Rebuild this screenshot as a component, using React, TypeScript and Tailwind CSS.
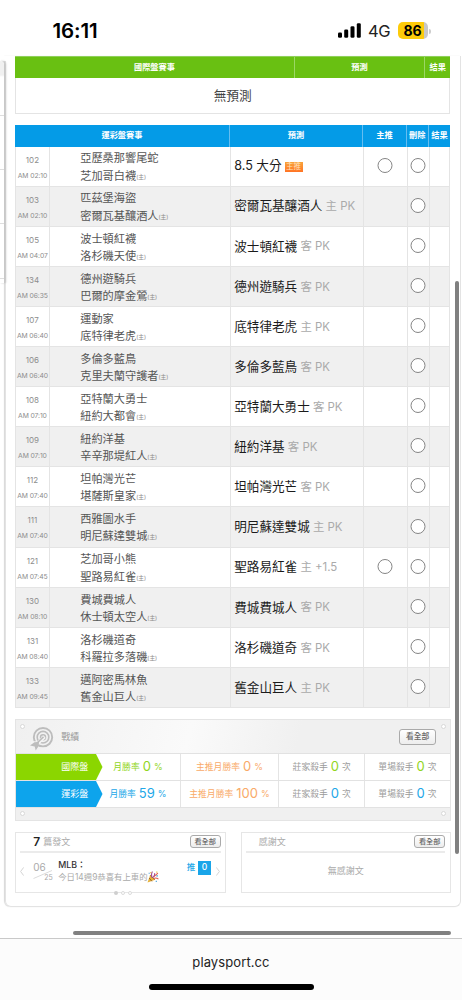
import React from 'react';

type Game = {
  no: string;
  time: string;
  away: string;
  home: string;
  pick: string;
  note?: string;
  main?: boolean;
  tag?: boolean;
};

const games: Game[] = [
  { no: '102', time: '02:10', away: '亞歷桑那響尾蛇', home: '芝加哥白襪', pick: '8.5 大分', main: true, tag: true },
  { no: '103', time: '02:10', away: '匹茲堡海盜', home: '密爾瓦基釀酒人', pick: '密爾瓦基釀酒人', note: '主 PK' },
  { no: '105', time: '04:07', away: '波士頓紅襪', home: '洛杉磯天使', pick: '波士頓紅襪', note: '客 PK' },
  { no: '134', time: '06:35', away: '德州遊騎兵', home: '巴爾的摩金鶯', pick: '德州遊騎兵', note: '客 PK' },
  { no: '107', time: '06:40', away: '運動家', home: '底特律老虎', pick: '底特律老虎', note: '主 PK' },
  { no: '106', time: '06:40', away: '多倫多藍鳥', home: '克里夫蘭守護者', pick: '多倫多藍鳥', note: '客 PK' },
  { no: '108', time: '07:10', away: '亞特蘭大勇士', home: '紐約大都會', pick: '亞特蘭大勇士', note: '客 PK' },
  { no: '109', time: '07:10', away: '紐約洋基', home: '辛辛那堤紅人', pick: '紐約洋基', note: '客 PK' },
  { no: '112', time: '07:40', away: '坦帕灣光芒', home: '堪薩斯皇家', pick: '坦帕灣光芒', note: '客 PK' },
  { no: '111', time: '07:40', away: '西雅圖水手', home: '明尼蘇達雙城', pick: '明尼蘇達雙城', note: '主 PK' },
  { no: '121', time: '07:45', away: '芝加哥小熊', home: '聖路易紅雀', pick: '聖路易紅雀', note: '主 +1.5', main: true },
  { no: '130', time: '08:10', away: '費城費城人', home: '休士頓太空人', pick: '費城費城人', note: '客 PK' },
  { no: '131', time: '08:40', away: '洛杉磯道奇', home: '科羅拉多落磯', pick: '洛杉磯道奇', note: '客 PK' },
  { no: '133', time: '09:45', away: '邁阿密馬林魚', home: '舊金山巨人', pick: '舊金山巨人', note: '主 PK' },
];

const Radio: React.FC = () => <span className="block size-[15px] -translate-x-[0.5px] -translate-y-px rounded-full border border-[#858585] bg-white" />;

const StatusBar: React.FC = () => (
  <header className="flex h-14 shrink-0 items-start pt-[19px] pl-[52.5px]">
    <span className="w-[284.5px] text-[20.5px] leading-6 font-semibold tracking-[-0.1px] text-black">16:11</span>
    <svg className="mt-[4px] h-4 w-6" viewBox="0 0 24 16">
      <rect x="1" y="9.5" width="4" height="5.3" rx="1.3" />
      <rect x="7.2" y="6.4" width="4" height="8.4" rx="1.3" />
      <rect x="13.5" y="3.3" width="4" height="11.5" rx="1.3" />
      <rect x="19.8" y="0.2" width="4" height="14.6" rx="1.3" />
    </svg>
    <span className="ml-[7px] w-[30px] text-[16.5px] leading-6 tracking-[-0.3px] text-[#222]">4G</span>
    <span className="mt-[3px] flex h-[17px] w-[30px] items-center justify-center rounded-[5px] bg-[linear-gradient(90deg,#fdcb0a_86%,#c8c8c8_86%)] pr-px text-[14px] leading-none font-bold text-black">86</span>
    <span className="mt-[10px] ml-px h-[5px] w-[1.5px] rounded-r bg-[#ccc]" />
  </header>
);

const GameRow: React.FC<{ game: Game; shaded: boolean }> = ({ game, shaded }) => (
  <div
    className={`grid h-[40.12px] grid-cols-[33.5px_181px_133.5px_43.5px_22px_19.5px] divide-x divide-[#e4e4e4] border-x border-b border-[#e4e4e4] ${shaded ? 'bg-[#f0f0f0]' : 'bg-white'}`}
  >
    <div className="flex flex-col items-center pt-[5px] text-[#8d8d8d]">
      <span className="text-[8px] leading-4">{game.no}</span>
      <span className="text-[6.8px] leading-4 tracking-[-0.1px] whitespace-nowrap">AM {game.time}</span>
    </div>
    <div className="pt-[3.8px] pl-[30.5px] text-[11.2px] leading-[16.2px] text-[#555]">
      <div>{game.away}</div>
      <div className="flex items-center">
        {game.home}
        <span className="pt-[2px] text-[5.7px] text-[#888]">(主)</span>
      </div>
    </div>
    <div className="flex items-center pt-[1.5px] pl-[3.5px] text-[12.6px] whitespace-pre text-[#1b1b1b]">
      <span>{game.pick}</span>
      {game.note && <span className="text-[11.4px] text-[#aaa]"> {game.note}</span>}
      {game.tag && (
        <span className="ml-[3px] flex h-[10px] w-[18px] items-center justify-center bg-linear-to-b from-[#f8a43c] to-[#ff7325] text-[7.5px] leading-none text-[#ffe3bd]">主推</span>
      )}
    </div>
    <div className="flex items-center justify-center">{game.main && <Radio />}</div>
    <div className="flex items-center justify-center">
      <Radio />
    </div>
    <div />
  </div>
);

const MoreButton: React.FC<{ large?: boolean }> = ({ large }) => (
  <span
    className={`flex items-center justify-center rounded-[3px] border border-[#aaa] bg-linear-to-b from-white to-[#ededed] leading-none font-medium text-[#666] ${large ? 'h-[15.5px] w-[37px] text-[7.8px]' : 'h-[13px] w-[31px] text-[7.2px]'}`}
  >
    看全部
  </span>
);

const Stat: React.FC<{ label: string; value: string; unit: string; tone: string; valueTone?: string }> = ({ label, value, unit, tone, valueTone }) => (
  <div className={`flex items-center justify-center text-[8.8px] ${tone}`}>
    {label}
    <span className={`mx-[3px] text-[13px] leading-none ${valueTone ?? ''}`}>{value}</span>
    {unit}
  </div>
);

const StatRow: React.FC<{ label: string; rate: string; mainRate: string; blue?: boolean }> = ({ label, rate, mainRate, blue }) => {
  const tone = blue ? 'text-[#22a7e8]' : 'text-[#91d51c]';
  return (
    <div className="flex h-[27px] border-b border-[#e2e2e2] bg-white">
      <div className={`flex w-[80px] items-center justify-end pr-[8px] text-[9px] text-white ${blue ? 'bg-[#0da4ec]' : 'bg-[#8bd600]'}`}>{label}</div>
      <svg className={`-mr-[7px] h-[26px] w-[7px] ${blue ? 'fill-[#0da4ec]' : 'fill-[#8bd600]'}`} viewBox="0 0 7 26">
        <path d="M0 0L6.5 13L0 26Z" />
      </svg>
      <div className="grid flex-1 grid-cols-[84.5px_98.5px_86px_1fr] divide-x divide-[#e4e4e4]">
        <Stat label="月勝率" value={rate} unit="%" tone={tone} />
        <Stat label="主推月勝率" value={mainRate} unit="%" tone="text-[#f9aa68]" />
        <Stat label="莊家殺手" value="0" unit="次" tone="text-[#9b9b9b]" valueTone={tone} />
        <Stat label="單場殺手" value="0" unit="次" tone="text-[#9b9b9b]" valueTone={tone} />
      </div>
    </div>
  );
};

const Rivet: React.FC = () => <span className="size-[5px] rounded-full border border-[#d8d8d8] bg-white" />;

const TargetIcon: React.FC = () => (
  <svg className="h-[24px] w-[24px]" viewBox="0 0 24 24" fill="none" stroke="#bdbdbd">
    <circle cx="13" cy="10.2" r="9.2" strokeWidth="1.9" />
    <circle cx="13" cy="10.2" r="5.8" strokeWidth="1.6" />
    <circle cx="13" cy="10.2" r="2.5" strokeWidth="1.5" />
    <path d="M1 16H8L14.5 9.8" stroke="#f4f4f4" strokeWidth="3.5" />
    <path d="M5 18L13.5 9.8" strokeWidth="1.6" />
    <path d="M0 18.6L4.4 15.3L9 15.1L8.7 19L5.7 23.6L4.7 19.5Z" fill="#bdbdbd" stroke="none" />
  </svg>
);

const StatsPanel: React.FC = () => (
  <section className="mt-[11px] w-[435.5px] border border-[#e4e4e4] bg-[#f0f0f0]">
    <div className="flex h-[33.5px] items-start justify-between border-b border-[#e2e2e2] bg-[linear-gradient(105deg,#f0f0f0,#fafafa_40%,#f0f0f0_65%)] px-[3.5px] pt-[4px]">
      <Rivet />
      <div className="mt-[3px] ml-[5px] flex flex-1 items-start">
        <TargetIcon />
        <span className="ml-[7.5px] pt-[2px] text-[9px] leading-4 text-[#999]">戰績</span>
      </div>
      <div className="mt-[5px] mr-[5px]">
        <MoreButton large />
      </div>
      <Rivet />
    </div>
    <StatRow label="國際盤" rate="0" mainRate="0" />
    <StatRow label="運彩盤" rate="59" mainRate="100" blue />
    <div className="flex h-[12px] items-center justify-between px-[3.5px]">
      <Rivet />
      <Rivet />
    </div>
  </section>
);

const PartyPopper: React.FC = () => (
  <svg className="-ml-px h-[12px] w-[12px]" viewBox="0 0 22 22">
    <path d="M1 21L6 7L15 16Z" fill="#e8b23a" />
    <path d="M4 13L9 19M6 8L14 16" stroke="#8d5620" strokeWidth="1.6" />
    <path d="M9 12Q7 5 10 1M11 12Q15 9 14 4" fill="none" stroke="#a5509f" strokeWidth="2" />
    <path d="M12 14Q16 11 21 15M13 10L20 4" fill="none" stroke="#e0574c" strokeWidth="2" />
    <path d="M3 3h2v2H3zM17 8h3v2h-3zM16 18h2v2h-2z" fill="#4b9fd7" />
    <path d="M17 1h2v2h-2zM6 2h2v2H6z" fill="#e9bd3e" />
  </svg>
);

const Chevron: React.FC<{ right?: boolean }> = ({ right }) => (
  <svg className={`h-[9px] w-[4px] ${right ? 'rotate-180' : ''}`} viewBox="0 0 4 9" fill="none" stroke="#d4d4d4">
    <path d="M3.7 0.4L0.6 4.5L3.7 8.6" />
  </svg>
);

const Posts: React.FC = () => (
  <section className="relative h-[61.5px] w-[210.5px] border border-[#e6e6e6] px-[4px]">
    <div className="flex h-[20.5px] items-center border-b-2 border-[#ebebeb] pl-[13px]">
      <span className="w-[10px] text-[12px] leading-none font-semibold text-[#222]">7</span>
      <span className="flex-1 text-[9px] text-[#aaa]">篇發文</span>
      <MoreButton />
    </div>
    <div className="flex items-start pt-[7.5px]">
      <div className="mt-[6px] w-[13px]">
        <Chevron />
      </div>
      <div className="relative h-[22px] w-[25px] text-[#aaa]">
        <span className="block text-[10px] leading-[12px]">06</span>
        <svg className="absolute top-[9px] left-0 h-[9px] w-[20px]" viewBox="0 0 20 9">
          <path d="M0.5 8.5L19 0.5" stroke="#dcdcdc" />
        </svg>
        <span className="absolute top-[13px] left-[11px] text-[7px] leading-[8px]">25</span>
      </div>
      <div className="w-[128.5px] whitespace-nowrap">
        <div className="h-[10px] text-[8.8px] leading-[7px] font-medium text-[#333]">MLB：</div>
        <div className="flex items-center text-[8.4px] leading-[10px] text-[#aaa]">
          今日14週9恭喜有上車的
          <PartyPopper />
        </div>
      </div>
      <span className="w-[11.5px] text-[8.5px] leading-[12px] font-medium text-[#22a7e8]">推</span>
      <span className="flex h-[14px] w-[12.5px] items-center justify-center bg-[#19a5e9] text-[8.5px] leading-none font-medium text-white">0</span>
      <div className="mt-[6px] ml-[5px]">
        <Chevron right />
      </div>
    </div>
    <div className="absolute -bottom-[2.5px] left-[98px] flex gap-[3px]">
      <span className="size-[4px] rounded-full bg-[#cfcfcf]" />
      <span className="size-[4px] rounded-full border border-[#dcdcdc] bg-white" />
      <span className="size-[4px] rounded-full border border-[#dcdcdc] bg-white" />
    </div>
  </section>
);

const Thanks: React.FC = () => (
  <section className="h-[61.5px] w-[210px] border border-[#e6e6e6] px-[4.5px]">
    <div className="flex h-[20.5px] items-center justify-between border-b-2 border-[#ebebeb] pl-[12.5px]">
      <span className="text-[9px] text-[#aaa]">感謝文</span>
      <MoreButton />
    </div>
    <div className="flex h-[36px] items-center justify-center text-[9px] text-[#aaa]">無感謝文</div>
  </section>
);

const App: React.FC = () => (
  <div className="flex h-[1000px] w-[462px] flex-col overflow-hidden bg-white font-['Inter','Noto_Sans_CJK_TC',sans-serif]">
    <StatusBar />
    <main className="relative flex h-[851px] shrink-0">
      <aside className="relative z-10 w-[4.5px] shrink-0">
        <div className="h-[5px] w-[8px] bg-white" />
        <div className="h-[222px] divide-y divide-[#dedede] rounded-tr-[4px] border-r border-[#c8c8c8] bg-white shadow-[1px_0_2px_#c4c4c4]">
          <div className="h-[55px] rounded-tr-[4px] bg-[linear-gradient(#f0f0f0_14px,#fff_16px)]" />
          <div className="h-[54px]" />
          <div className="h-[54px]" />
          <div className="h-[55px]" />
          <div />
        </div>
      </aside>
      <div className="h-full w-[456.5px] rounded-b-[6px] border-r border-b border-l border-[#e3e3e3] pl-[9.7px] shadow-[-1px_0_1px_#d8d8d8]">
        <div className="w-[435px]">
          <div className="grid h-[22px] grid-cols-[279.5px_130.5px_25px] divide-x divide-[#9bd765] border-t border-[#8fd05a] bg-[#69c012] text-center text-[8.2px] leading-[21px] font-bold text-white">
            <span>國際盤賽事</span>
            <span>預測</span>
            <span>結果</span>
          </div>
          <div className="flex h-[36px] items-center justify-center border border-t-0 border-[#e4e4e4] text-[12.7px] text-[#444]">無預測</div>
          <div className="mt-[11px] grid h-[21.5px] grid-cols-[214.5px_133.5px_43.5px_22px_21.5px] divide-x divide-[#65bdf0] bg-[#049be7] text-center text-[8.2px] leading-[21.5px] font-bold whitespace-nowrap text-white">
            <span>運彩盤賽事</span>
            <span>預測</span>
            <span>主推</span>
            <span>刪除</span>
            <span>結果</span>
          </div>
          {games.map((game, i) => (
            <GameRow key={game.no} game={game} shaded={i % 2 === 1} />
          ))}
        </div>
        <StatsPanel />
        <div className="mt-[11px] flex gap-[15px]">
          <Posts />
          <Thanks />
        </div>
      </div>
      <span className="absolute top-[225px] left-[454.5px] h-[573px] w-[4px] rounded-full bg-[#808080]" />
    </main>
    <div className="flex h-[32px] shrink-0 items-end border-b border-[#c9c9c9] pb-[3px] pl-[73px]">
      <span className="h-[4px] w-[377.5px] rounded-full bg-[#808080]" />
    </div>
    <footer className="flex flex-1 flex-col items-center bg-[#fcfcfc] pt-[14px]">
      <span className="text-[13px] leading-[18px] tracking-[0.1px] text-[#222]">playsport.cc</span>
      <span className="mt-[13px] h-[6px] w-[165px] rounded-full bg-black" />
    </footer>
  </div>
);

export default App;
